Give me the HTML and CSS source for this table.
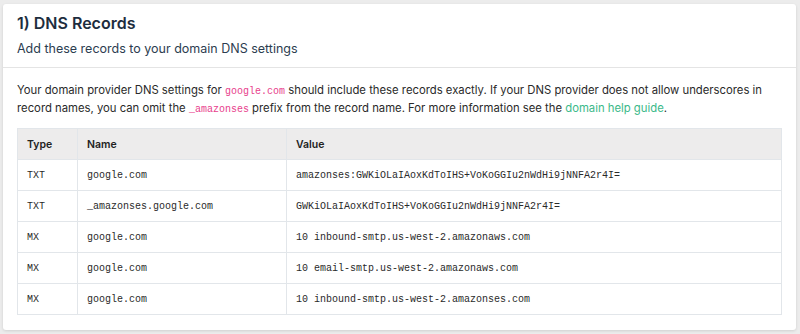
FILE: index.html
```html
<!DOCTYPE html>
<html lang="en">
<head>
  <meta charset="UTF-8" />
  <title>DNS Records</title>
  <link rel="stylesheet" href="styles.css">
</head>
<body>

  <div class="card">
    <div class="card-header">
      <h2>1) DNS Records</h2>
      <p class="subtitle">Add these records to your domain DNS settings</p>
    </div>

    <div class="card-body">
      <p class="intro">
        Your domain provider DNS settings for <code>google.com</code> should include these records exactly. If your DNS provider does not allow underscores in
        record names, you can omit the <code>_amazonses</code> prefix from the record name. For more information see the <a href="#">domain help guide</a>.
      </p>

      <table class="records">
        <thead>
          <tr>
            <th class="col-type">Type</th>
            <th class="col-name">Name</th>
            <th>Value</th>
          </tr>
        </thead>
        <tbody>
          <tr>
            <td>TXT</td>
            <td>google.com</td>
            <td>amazonses:GWKiOLaIAoxKdToIHS+VoKoGGIu2nWdHi9jNNFA2r4I=</td>
          </tr>
          <tr>
            <td>TXT</td>
            <td>_amazonses.google.com</td>
            <td>GWKiOLaIAoxKdToIHS+VoKoGGIu2nWdHi9jNNFA2r4I=</td>
          </tr>
          <tr>
            <td>MX</td>
            <td>google.com</td>
            <td>10 inbound-smtp.us-west-2.amazonaws.com</td>
          </tr>
          <tr>
            <td>MX</td>
            <td>google.com</td>
            <td>10 email-smtp.us-west-2.amazonaws.com</td>
          </tr>
          <tr>
            <td>MX</td>
            <td>google.com</td>
            <td>10 inbound-smtp.us-west-2.amazonses.com</td>
          </tr>
        </tbody>
      </table>
    </div>
  </div>

</body>
</html>
```

FILE: styles.css
```css
* {
  box-sizing: border-box;
}

body {
  margin: 0;
  padding: 4px 4px 5px 3px;
  background: #ececec;
  font-family: 'Inter', 'Noto Sans', sans-serif;
  color: #2b2b2b;
}

.card {
  background: #fff;
  border-radius: 3px;
  box-shadow: 0 1px 3px rgba(0, 0, 0, 0.12);
}

.card-header {
  padding: 8px 14px 9px;
  border-bottom: 1px solid #e4e4e4;
}

h2 {
  margin: 0;
  font-size: 16px;
  font-weight: 600;
  color: #1d2d3e;
  line-height: 22px;
}

.subtitle {
  margin: 6px 0 0;
  font-size: 12.5px;
  color: #2c3d50;
  line-height: 18px;
}

.card-body {
  padding: 13px 14px 15px;
}

.intro {
  margin: 0 0 11px;
  font-size: 11.3px;
  line-height: 18px;
  color: #2a2a2a;
}

code {
  font-family: 'Liberation Mono', monospace;
  font-size: 10px;
  line-height: 1;
  color: #e83e8c;
}

a {
  color: #3cb98a;
  text-decoration: none;
}

.records {
  width: 100%;
  border-collapse: collapse;
  border: 1px solid #e2e6ea;
}

.records th,
.records td {
  border: 1px solid #e2e6ea;
  padding: 0 9px;
  height: 31px;
  text-align: left;
}

.records th {
  background: #edecec;
  font-size: 10.5px;
  font-weight: 600;
  color: #222;
}

.records td {
  font-family: 'Liberation Mono', monospace;
  font-size: 10px;
  color: #2a2a2a;
}

.col-type {
  width: 60px;
}

.col-name {
  width: 209px;
}
```
